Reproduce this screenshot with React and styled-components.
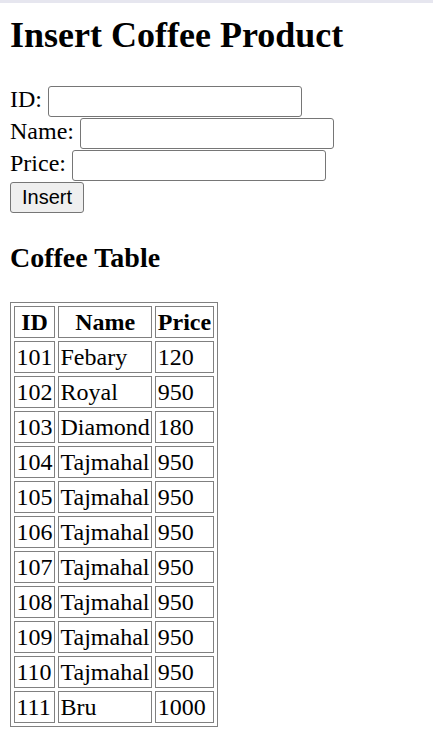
import React from 'react';
import styled, { createGlobalStyle } from 'styled-components';

const GlobalStyle = createGlobalStyle`
  html, body {
    margin: 0;
    padding: 0;
    background: #ffffff;
  }
  body {
    font-family: "Liberation Serif", "Times New Roman", serif;
    font-size: 24px;
    color: #000000;
  }
`;

const TopStrip = styled.div`
  height: 3px;
  background: #e6e6ef;
`;

const Page = styled.div`
  padding: 0 10px 20px 10px;
`;

const Title = styled.h1`
  font-size: 36px;
  font-weight: bold;
  margin: 11px 0 29.5px 0;
  line-height: normal;
`;

const Form = styled.form`
  display: flex;
  flex-direction: column;
  align-items: flex-start;
`;

const Row = styled.div`
  display: flex;
  align-items: center;
  height: 32px;
`;

const Label = styled.label`
  font-size: 24px;
  padding-bottom: 4px;
  margin-right: 6px;
`;

const TextInput = styled.input`
  box-sizing: border-box;
  width: 254px;
  height: 31px;
  border: 1px solid #767676;
  border-radius: 3px;
  background: #ffffff;
  padding: 1px 3px;
  font-size: 20px;
  font-family: "Liberation Sans", Arial, sans-serif;
`;

const Button = styled.button`
  box-sizing: border-box;
  height: 31px;
  padding: 0 11px;
  border: 1px solid #767676;
  border-radius: 3px;
  background: #efefef;
  color: #000000;
  font-family: "Liberation Sans", Arial, sans-serif;
  font-size: 20px;
`;

const SectionTitle = styled.h3`
  font-size: 28px;
  font-weight: bold;
  line-height: normal;
  margin: 28.5px 0 28px 0;
`;

const Table = styled.table`
  border: 1px solid #808080;
  border-collapse: separate;
  border-spacing: 3px;
  font-size: 24px;
`;

const Tr = styled.tr`
  height: 32px;
`;

const Th = styled.th`
  border: 1px solid #808080;
  padding: 0 1.5px;
  font-weight: bold;
  text-align: center;
`;

const Td = styled.td`
  border: 1px solid #808080;
  padding: 0 1.5px;
  text-align: left;
`;

const coffees = [
  { id: 101, name: 'Febary', price: 120 },
  { id: 102, name: 'Royal', price: 950 },
  { id: 103, name: 'Diamond', price: 180 },
  { id: 104, name: 'Tajmahal', price: 950 },
  { id: 105, name: 'Tajmahal', price: 950 },
  { id: 106, name: 'Tajmahal', price: 950 },
  { id: 107, name: 'Tajmahal', price: 950 },
  { id: 108, name: 'Tajmahal', price: 950 },
  { id: 109, name: 'Tajmahal', price: 950 },
  { id: 110, name: 'Tajmahal', price: 950 },
  { id: 111, name: 'Bru', price: 1000 },
];

const App = () => {
  return (
    <>
      <GlobalStyle />
      <TopStrip />
      <Page>
        <Title>Insert Coffee Product</Title>
        <Form onSubmit={(e) => e.preventDefault()}>
          <Row>
            <Label htmlFor='id'>ID:</Label>
            <TextInput id='id' type='text' />
          </Row>
          <Row>
            <Label htmlFor='name'>Name:</Label>
            <TextInput id='name' type='text' />
          </Row>
          <Row>
            <Label htmlFor='price'>Price:</Label>
            <TextInput id='price' type='text' />
          </Row>
          <Row>
            <Button type='submit'>Insert</Button>
          </Row>
        </Form>

        <SectionTitle>Coffee Table</SectionTitle>
        <Table>
          <thead>
            <Tr>
              <Th>ID</Th>
              <Th>Name</Th>
              <Th>Price</Th>
            </Tr>
          </thead>
          <tbody>
            {coffees.map((c) => (
              <Tr key={c.id}>
                <Td>{c.id}</Td>
                <Td>{c.name}</Td>
                <Td>{c.price}</Td>
              </Tr>
            ))}
          </tbody>
        </Table>
      </Page>
    </>
  );
};

export default App;
